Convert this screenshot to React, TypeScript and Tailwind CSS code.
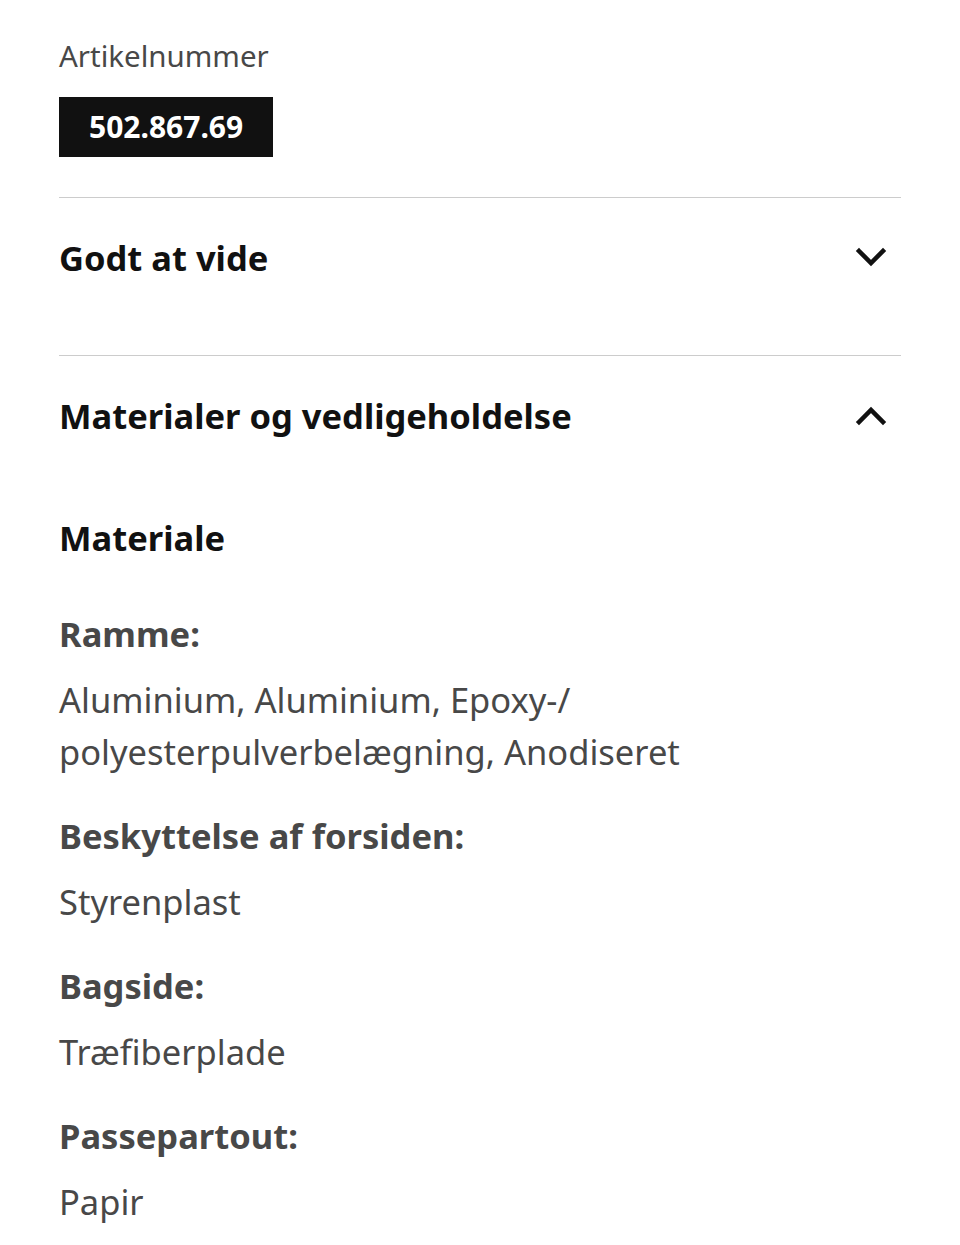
import React from 'react';

const font = { fontFamily: '"Noto Sans", "Open Sans", sans-serif' };

function Chevron({ up }: { up?: boolean }) {
    return (
        <svg width="32" height="32" viewBox="0 0 32 32" fill="none" className="shrink-0">
            <polyline
                points={up ? '4,24 16,12 28,24' : '4,10 16,22 28,10'}
                stroke="#111111"
                strokeWidth="4.5"
                strokeLinecap="square"
                strokeLinejoin="miter"
                transform={up ? 'translate(0,-2)' : 'translate(0,-1)'}
            />
        </svg>
    );
}

const materials = [
    { label: 'Ramme:', value: 'Aluminium, Aluminium, Epoxy-/ polyesterpulverbelægning, Anodiseret' },
    { label: 'Beskyttelse af forsiden:', value: 'Styrenplast' },
    { label: 'Bagside:', value: 'Træfiberplade' },
    { label: 'Passepartout:', value: 'Papir' },
];

export default function App() {
    return (
        <div className="bg-white min-h-[1245px] px-[59px] pt-[36px]" style={font}>
            {/* Artikelnummer */}
            <div className="text-[29.5px] leading-[40px] text-[#484848]">Artikelnummer</div>
            <div className="mt-[21px] inline-block bg-[#111111] px-[30px] h-[60px] leading-[60px] text-[30px] font-bold text-white">
                502.867.69
            </div>

            {/* Godt at vide */}
            <div className="mt-[40px] border-t border-[#cccccc]">
                <div className="flex items-center justify-between pt-[40px] pb-[77px] pr-[14px]">
                    <span className="text-[34.5px] leading-[40px] font-bold text-[#111111]">Godt at vide</span>
                    <Chevron />
                </div>
            </div>

            {/* Materialer og vedligeholdelse */}
            <div className="border-t border-[#cccccc]">
                <div className="flex items-center justify-between pt-[40px] pr-[14px]">
                    <span className="text-[34.5px] leading-[40px] font-bold text-[#111111]">
                        Materialer og vedligeholdelse
                    </span>
                    <Chevron up />
                </div>

                <div className="mt-[82px] text-[34.5px] leading-[40px] font-bold text-[#111111]">Materiale</div>

                <div className="mt-[56px] flex flex-col gap-[38px]">
                    {materials.map((m) => (
                        <div key={m.label}>
                            <div className="text-[34.5px] leading-[40px] font-bold text-[#484848]">{m.label}</div>
                            <div className="mt-[20px] max-w-[700px] text-[34.5px] leading-[52px] text-[#484848]">
                                {m.value}
                            </div>
                        </div>
                    ))}
                </div>
            </div>
        </div>
    );
}
